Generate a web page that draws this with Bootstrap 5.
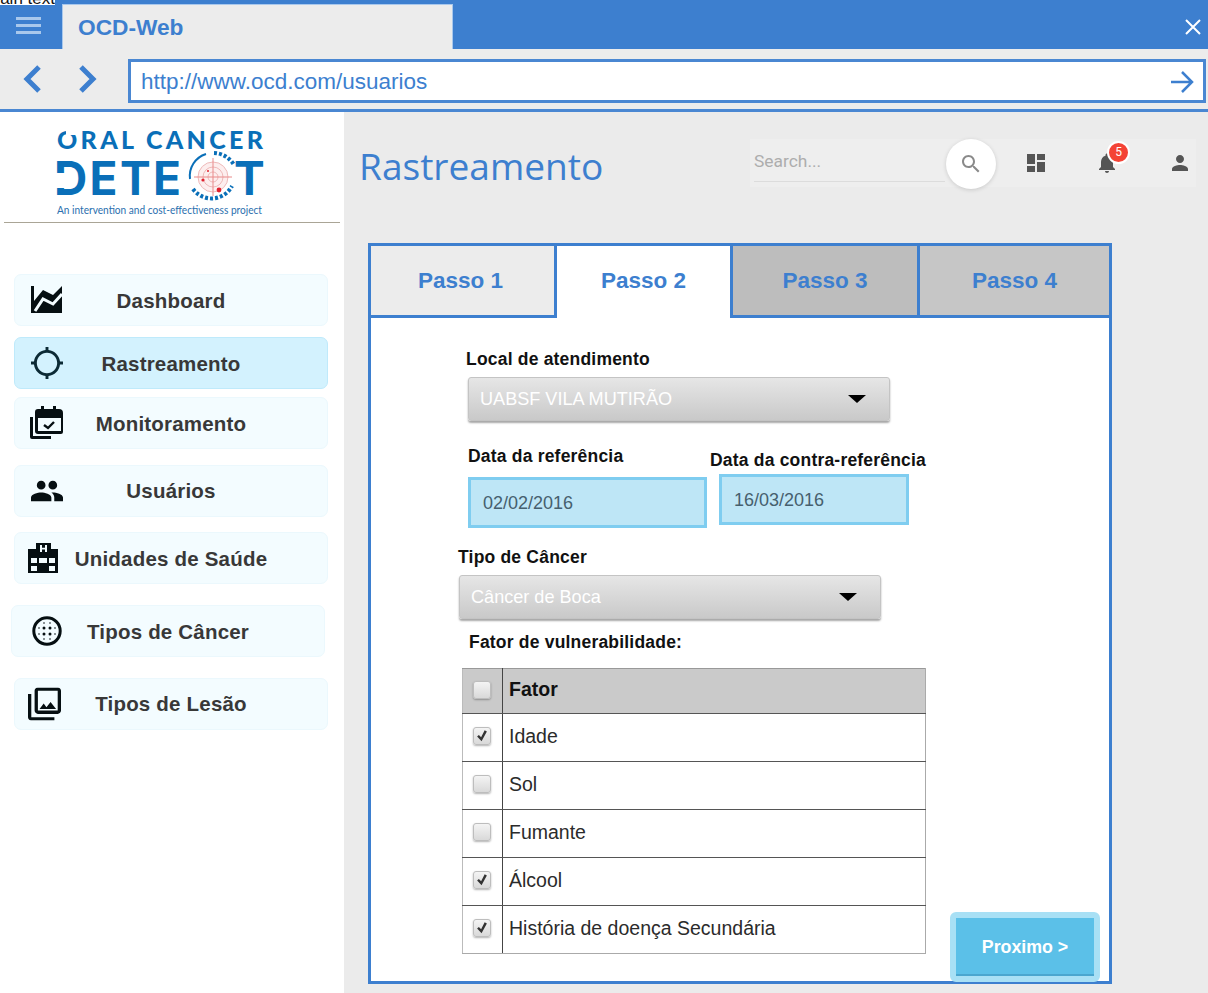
<!DOCTYPE html>
<html lang="en">
<head>
    <meta charset="UTF-8">
    <meta name="viewport" content="width=device-width, initial-scale=1.0">
    <title>OCD-Web</title>
    <link rel="stylesheet" href="https://cdn.jsdelivr.net/npm/bootstrap@5.3.0/dist/css/bootstrap.min.css">
    <style>
        html, body { height: 993px; overflow: hidden; }
        body { font-family: "Liberation Sans", Arial, sans-serif; background: #fff; position: relative; }
        .stray-text { position: absolute; left: -14px; top: -11px; height: 16px; overflow: hidden; font-size: 17px; line-height: 20px; color: #111; background: #fff; z-index: 5; white-space: nowrap; }

        .tab-strip { height: 49px; background: #3d7fcf; }
        .menu-btn { width: 62px; padding-top: 17px; }
        .menu-btn span { display: block; width: 25px; height: 3px; background: #a9c8ec; margin: 0 0 4px 16px; }
        .browser-tab { width: 391px; margin-top: 4px; background: #ececec; border: 1px solid #a9c8ec; border-bottom: 0; color: #3d7fcf; font-size: 22.7px; font-weight: 700; line-height: 44px; padding-left: 15px; }
        .close-x { margin: 18px 6px 0 0; }

        .address-row { height: 63px; background: #ececec; border-bottom: 3px solid #4a87d2; }
        .nav-arrows { width: 128px; gap: 32px; padding-left: 22px; }
        .url-box { width: 1078px; height: 44px; margin-top: 10px; background: #fff; border: 3px solid #4a87d2; color: #3d7fcf; font-size: 22.5px; line-height: 38px; padding: 1px 9px 0 10px; }

        .page-body { height: 881px; }
        .side-col { width: 344px; background: #fff; }
        .logo-box { width: 336px; height: 111px; margin-left: 4px; border-bottom: 1px solid #aaa596; padding: 15px 0 0 52px; }
        .menu-list { padding-top: 51px; }
        .menu-item { width: 314px; height: 52px; margin-left: 14px; padding-left: 16px; background: #f3fcff; border: 1px solid #ebf8fd; border-radius: 7px; font-weight: 700; font-size: 20.5px; color: #383838; letter-spacing: .2px; position: relative; }
        .menu-item svg { position: absolute; left: 16px; top: 50%; transform: translateY(-50%); }
        .menu-item.on { background: #d3f2fe; border-color: #bfeafb; }
        .menu-label { flex: 1; text-align: center; padding: 2px 16px 0 0; }
        .menu-label.up-1 { padding-top: 0; }
        .gap-a { margin-top: 11px; }
        .gap-b { margin-top: 8px; }
        .gap-c { margin-top: 16px; }
        .gap-d { margin-top: 15px; }
        .gap-e { margin: 21px 0 0 11px; }
        .gap-f { margin-top: 21px; }
        .menu-item svg.ico-15 { left: 15px; }
        .menu-item svg.ico-13 { left: 13px; }
        .menu-item svg.ico-20 { left: 20px; }

        .main-col { background: #ebebeb; padding: 25px 0 0 15px; }
        .page-title { font-family: "Open Sans", sans-serif; font-weight: 500; font-size: 37.1px; line-height: 58px; color: #3d7fcf; width: 391px; white-space: nowrap; }
        .tool-bar { width: 446px; height: 48px; margin-top: 2px; background: #eeeeee; position: relative; }
        .search-field { width: 191px; height: 43px; margin-left: 4px; border-bottom: 1px solid #dcdcdc; font-family: Roboto, sans-serif; font-size: 17.4px; color: #adadad; line-height: 44px; }
        .search-btn { position: absolute; left: 196px; top: 0; width: 50px; height: 50px; border-radius: 50%; background: #fff; box-shadow: 0 1px 4px rgba(0,0,0,.15); }
        .tool-icon { position: absolute; top: 12px; }
        .icon-grid { left: 274px; }
        .icon-bell { left: 345px; }
        .icon-user { left: 418px; }
        .bell-count { position: absolute; left: 357px; top: 2px; width: 23px; height: 23px; border-radius: 50%; background: #f44336; border: 2px solid #fff; color: #fff; font-family: Roboto, sans-serif; font-size: 12px; line-height: 19px; text-align: center; }

        .step-panel { width: 744px; height: 741px; margin: 48px 0 0 9px; background: #fff; border: 3px solid #3d7fcf; }
        .step-tabs { height: 72px; }
        .step-tab { height: 72px; background: #ececec; color: #3d7fcf; font-size: 22.5px; font-weight: 700; border-bottom: 3px solid #3d7fcf; border-right: 3px solid #3d7fcf; line-height: 69px; text-align: center; }
        .step-tab.t1 { width: 186px; padding-right: 4px; }
        .step-tab.t2 { width: 176px; background: #fff; border-bottom: 0; }
        .step-tab.t3 { width: 187px; background: #bdbdbd; }
        .step-tab.t4 { width: 189px; background: #c6c6c6; border-right: 0; }

        .form-area { padding-top: 31px; }
        .field-label { font-size: 17.5px; font-weight: 700; line-height: 20px; color: #111; letter-spacing: .2px; }
        .fake-select { width: 422px; height: 44px; border-radius: 3px; border: 1px solid #c4c4c4; background: linear-gradient(#e6e6e6, #c9c9c9); box-shadow: 0 2px 2px rgba(0,0,0,.35); color: #fff; font-size: 18.1px; line-height: 42px; padding: 0 11px; position: relative; }
        .fake-select::after { content: ""; position: absolute; right: 23px; top: 17px; border: 9px solid transparent; border-top: 8px solid #000; border-bottom: 0; }
        .date-box { background: #bee6f6; border: 3px solid #7fcdf0; color: #46606e; font-size: 18px; padding: 0 12px; }
        .date-a { width: 239px; height: 51px; line-height: 47px; }
        .date-b { width: 190px; height: 51px; line-height: 46px; }
        .lbl-local { margin-left: 95px; }
        .sel-local { margin: 8px 0 0 97px; }
        .dates-row { margin: 25px 0 0 97px; }
        .date-col-a { width: 241px; }
        .date-col-a .field-label { margin-bottom: 11px; }
        .date-col-b { margin-top: 4px; margin-left: 1px; }
        .date-col-b .field-label { margin-bottom: 4px; white-space: nowrap; }
        .date-col-b .date-box { margin-left: 9px; }
        .lbl-tipo { margin: 19px 0 0 87px; }
        .sel-tipo { margin: 8px 0 0 88px; }
        .lbl-fator { margin: 13px 0 0 98px; }
        .factor-row { margin: 16px 0 0 91px; }

        .factor-table { width: 464px; border-collapse: collapse; font-size: 19.5px; color: #2b2b2b; margin: 0; }
        .factor-table th, .factor-table td { height: 48px; padding: 0 6px 2px; border: 0; border-bottom: 1px solid #555; vertical-align: middle; background: #fff; }
        .factor-table th { height: 45px; background: #cacaca; font-weight: 700; color: #111; border-top: 1px solid #999; }
        .factor-table tr:last-child td { border-bottom: 1px solid #aaa; }
        .factor-table .tick-cell { width: 40px; padding: 0 0 3px; border-right: 1px solid #444; border-left: 1px solid #bbb; }
        .factor-table .end-cell { border-right: 1px solid #aaa; }
        .tick { appearance: none; display: block; width: 18px; height: 18px; margin: 0 0 0 10px; border: 1px solid #bdbdbd; border-radius: 3px; background: linear-gradient(#f4f4f4, #d9d9d9); box-shadow: 0 1px 2px rgba(0,0,0,.3); }
        .tick:checked { background: url("data:image/svg+xml,%3Csvg xmlns='http://www.w3.org/2000/svg' viewBox='0 0 18 18'%3E%3Cpath d='M3.500 9.500l2-1.500 2.500 2.500L12 2.500l2.500 1.500L8.500 15z' fill='%23333'/%3E%3C/svg%3E") center/100% no-repeat, linear-gradient(#f4f4f4, #d9d9d9); }

        .next-btn { width: 150px; height: 70px; margin: 0 0 -28px 24px; border: 6px solid #a8e0f5; border-radius: 6px; background: #5bc0e8; color: #fff; font-size: 17.8px; font-weight: 700; box-shadow: inset 0 -2px 0 #4aa6cf; padding: 1px 0 0; flex: none; }
    </style>
</head>
<body>
    <div class="stray-text">Main text</div>

    <!-- browser chrome -->
    <div class="tab-strip d-flex">
        <div class="menu-btn"><span></span><span></span><span></span></div>
        <div class="browser-tab">OCD-Web</div>
        <svg class="close-x ms-auto" width="18" height="18" viewBox="0 0 18 18"><path d="M2 2l14 14M16 2L2 16" stroke="#fff" stroke-width="2" fill="none"/></svg>
    </div>
    <div class="address-row d-flex">
        <div class="nav-arrows d-flex align-items-center">
            <svg width="22" height="28" viewBox="0 0 22 28"><path d="M17 2L5 14l12 12" stroke="#3d7fcf" stroke-width="5" fill="none"/></svg>
            <svg width="22" height="28" viewBox="0 0 22 28"><path d="M5 2l12 12L5 26" stroke="#3d7fcf" stroke-width="5" fill="none"/></svg>
        </div>
        <div class="url-box d-flex justify-content-between align-items-center">
            <span>http://www.ocd.com/usuarios</span>
            <svg width="24" height="24" viewBox="0 0 24 24"><path d="M1 12h21M12 2l10 10-10 10" stroke="#3d7fcf" stroke-width="2.500" fill="none"/></svg>
        </div>
    </div>

    <div class="page-body d-flex">
        <!-- left menu -->
        <div class="side-col">
            <div class="logo-box">
                <svg width="212" height="92" viewBox="0 0 212 92">
                    <text x="1" y="22" font-family="Lato, sans-serif" font-weight="900" font-size="25" fill="#0a6fb8" textLength="206" lengthAdjust="spacing">ORAL CANCER</text>
                    <rect x="10" y="2" width="11" height="6" fill="#fff"/>
                    <text x="-2" y="68" font-family="Inter, sans-serif" font-weight="700" font-size="46" fill="#0a6fb8" textLength="127" lengthAdjust="spacing">DETE</text>
                    <rect x="0" y="46" width="12" height="15" fill="#fff"/>
                    <text x="178" y="68" font-family="Inter, sans-serif" font-weight="700" font-size="46" fill="#0a6fb8">T</text>
                    <g fill="none">
                        <circle cx="157" cy="50" r="15" fill="#fdeeee" stroke="#eeb9b9"/>
                        <circle cx="157" cy="50" r="10" stroke="#eeb9b9"/>
                        <circle cx="157" cy="50" r="5" stroke="#eeb9b9"/>
                        <path d="M138 50h38M157 31v38" stroke="#e98a8a"/>
                        <path d="M134 52a23 23 0 0 1 16-25" stroke="#0a6fb8" stroke-width="2"/>
                        <path d="M137 62a23 23 0 0 0 39-3M158 26a24 24 0 0 1 20 12" stroke="#0a6fb8" stroke-width="4" stroke-dasharray="3 2"/>
                    </g>
                    <circle cx="147" cy="53" r="1.600" fill="#e01f2d"/>
                    <circle cx="163" cy="63" r="2.400" fill="#e01f2d"/>
                    <circle cx="152" cy="44" r="1" fill="#e01f2d"/>
                    <text x="1" y="87" font-family="Lato, sans-serif" font-size="10.500" fill="#2a6fae" textLength="205" lengthAdjust="spacingAndGlyphs">An intervention and cost-effectiveness project</text>
                </svg>
            </div>
            <div class="menu-list">
                <div class="menu-item d-flex align-items-center">
                    <svg width="32" height="28" viewBox="0 0 32 28"><path d="M0 0h3v15L12 4l10 5L31 0v27H0z" fill="#060f12"/><path d="M4 25l8-12 10 5 9-10" stroke="#f3fcff" stroke-width="3" fill="none"/></svg>
                    <span class="menu-label">Dashboard</span>
                </div>
                <div class="menu-item on d-flex align-items-center gap-a">
                    <svg width="32" height="32" viewBox="1 1 22 22"><path fill="#0b2a35" d="M20.940 11c-.46-4.170-3.770-7.480-7.940-7.940V1h-2v2.060C6.830 3.520 3.520 6.830 3.060 11H1v2h2.060c.46 4.170 3.770 7.480 7.940 7.940V23h2v-2.060c4.170-.46 7.480-3.770 7.940-7.940H23v-2h-2.060zM12 19c-3.870 0-7-3.130-7-7s3.130-7 7-7 7 3.130 7 7-3.130 7-7 7z"/></svg>
                    <span class="menu-label">Rastreamento</span>
                </div>
                <div class="menu-item d-flex align-items-center gap-b">
                    <svg class="ico-15" width="34" height="34" viewBox="0 0 34 34"><path fill="#060f12" d="M0 11h3v19h18v3H2a2 2 0 0 1-2-2z"/><path fill="#060f12" d="M8 3h3V0h3v3h9V0h3v3h3a4 4 0 0 1 4 4v19a2 2 0 0 1-2 2H8a3 3 0 0 1-3-3V6a3 3 0 0 1 3-3zm0 9v13h23V12z"/><path d="M14 19l4 3 6-6" stroke="#060f12" stroke-width="2.400" fill="none"/></svg>
                    <span class="menu-label">Monitoramento</span>
                </div>
                <div class="menu-item d-flex align-items-center gap-c">
                    <svg width="32" height="32" viewBox="1 1 22 22"><path fill="#060f12" d="M16 11c1.660 0 2.990-1.340 2.990-3S17.660 5 16 5c-1.660 0-3 1.340-3 3s1.340 3 3 3zm-8 0c1.660 0 2.990-1.340 2.990-3S9.660 5 8 5C6.340 5 5 6.340 5 8s1.340 3 3 3zm0 2c-2.330 0-7 1.170-7 3.500V19h14v-2.500c0-2.330-4.670-3.500-7-3.500zm8 0c-.29 0-.62.02-.97.05 1.160.84 1.970 1.970 1.970 3.450V19h6v-2.500c0-2.330-4.670-3.500-7-3.500z"/></svg>
                    <span class="menu-label up-1">Usuários</span>
                </div>
                <div class="menu-item d-flex align-items-center gap-d">
                    <svg class="ico-13" width="30" height="30" viewBox="0 0 30 30"><path fill="#060f12" fill-rule="evenodd" d="M8 0h15v6h7v24H0V6h8zM12 2v7h2V6.500h3V9h2V2h-2v2.700h-3V2zM3 15v5h6v-5zm8 0v5h8v-5zm10 0v5h6v-5zM3 23v5h6v-5zm18 0v5h6v-5z"/></svg>
                    <span class="menu-label">Unidades de Saúde</span>
                </div>
                <div class="menu-item d-flex align-items-center gap-e">
                    <svg class="ico-20" width="30" height="30" viewBox="0 0 30 30"><circle cx="15" cy="15" r="13.200" fill="none" stroke="#060f12" stroke-width="3"/><g fill="#060f12"><circle cx="12" cy="12" r="1.500"/><circle cx="18" cy="12" r="1.500"/><circle cx="12" cy="18" r="1.500"/><circle cx="18" cy="18" r="1.500"/><circle cx="12" cy="7" r=".8"/><circle cx="18" cy="7" r=".8"/><circle cx="12" cy="23" r=".8"/><circle cx="18" cy="23" r=".8"/><circle cx="7" cy="12" r=".8"/><circle cx="7" cy="18" r=".8"/><circle cx="23" cy="12" r=".8"/><circle cx="23" cy="18" r=".8"/></g></svg>
                    <span class="menu-label">Tipos de Câncer</span>
                </div>
                <div class="menu-item d-flex align-items-center gap-f">
                    <svg class="ico-13" width="33" height="33" viewBox="2 2 20 20"><path fill="#060f12" d="M20 4v12H8V4h12m0-2H8c-1.100 0-2 .9-2 2v12c0 1.100.9 2 2 2h12c1.100 0 2-.9 2-2V4c0-1.100-.9-2-2-2zm-8.500 9.670l1.690 2.260 2.480-3.100L19 15H9zM2 6v14c0 1.100.9 2 2 2h14v-2H4V6H2z"/></svg>
                    <span class="menu-label up-1">Tipos de Lesão</span>
                </div>
            </div>
        </div>

        <!-- main area -->
        <div class="main-col flex-grow-1">
            <div class="d-flex">
                <div class="page-title">Rastreamento</div>
                <div class="tool-bar">
                    <div class="search-field">Search...</div>
                    <div class="search-btn d-flex align-items-center justify-content-center">
                        <svg width="24" height="24" viewBox="0 0 24 24"><path fill="#8a8a8a" d="M15.500 14h-.79l-.28-.27C15.410 12.590 16 11.110 16 9.500 16 5.910 13.090 3 9.500 3S3 5.910 3 9.500 5.910 16 9.500 16c1.610 0 3.090-.59 4.230-1.570l.27.28v.79l5 4.990L20.490 19l-4.990-5zm-6 0C7.010 14 5 11.990 5 9.500S7.010 5 9.500 5 14 7.010 14 9.500 11.990 14 9.500 14z"/></svg>
                    </div>
                    <svg class="tool-icon icon-grid" width="24" height="24" viewBox="0 0 24 24"><path fill="#555" d="M3 13h8V3H3v10zm0 8h8v-6H3v6zm10 0h8V11h-8v10zm0-18v6h8V3h-8z"/></svg>
                    <svg class="tool-icon icon-bell" width="24" height="24" viewBox="0 0 24 24"><path fill="#555" d="M12 22c1.100 0 2-.9 2-2h-4c0 1.100.89 2 2 2zm6-6v-5c0-3.070-1.640-5.640-4.500-6.320V4c0-.83-.67-1.500-1.500-1.500s-1.500.67-1.500 1.500v.68C7.630 5.360 6 7.920 6 11v5l-2 2v1h16v-1l-2-2z"/></svg>
                    <span class="bell-count">5</span>
                    <svg class="tool-icon icon-user" width="24" height="24" viewBox="0 0 24 24"><path fill="#555" d="M12 12c2.210 0 4-1.790 4-4s-1.790-4-4-4-4 1.790-4 4 1.790 4 4 4zm0 2c-2.670 0-8 1.340-8 4v2h16v-2c0-2.660-5.330-4-8-4z"/></svg>
                </div>
            </div>

            <div class="step-panel">
                <div class="step-tabs d-flex">
                    <div class="step-tab t1">Passo 1</div>
                    <div class="step-tab t2">Passo 2</div>
                    <div class="step-tab t3">Passo 3</div>
                    <div class="step-tab t4">Passo 4</div>
                </div>
                <div class="form-area">
                    <div class="field-label lbl-local">Local de atendimento</div>
                    <div class="fake-select sel-local">UABSF VILA MUTIRÃO</div>

                    <div class="d-flex dates-row">
                        <div class="date-col-a">
                            <div class="field-label">Data da referência</div>
                            <div class="date-box date-a">02/02/2016</div>
                        </div>
                        <div class="date-col-b">
                            <div class="field-label">Data da contra-referência</div>
                            <div class="date-box date-b">16/03/2016</div>
                        </div>
                    </div>

                    <div class="field-label lbl-tipo">Tipo de Câncer</div>
                    <div class="fake-select sel-tipo">Câncer de Boca</div>
                    <div class="field-label lbl-fator">Fator de vulnerabilidade:</div>

                    <div class="d-flex align-items-end factor-row">
                        <table class="table factor-table">
                            <thead>
                                <tr><th class="tick-cell"><input class="tick" type="checkbox"></th><th class="end-cell">Fator</th></tr>
                            </thead>
                            <tbody>
                                <tr><td class="tick-cell"><input class="tick" type="checkbox" checked></td><td class="end-cell">Idade</td></tr>
                                <tr><td class="tick-cell"><input class="tick" type="checkbox"></td><td class="end-cell">Sol</td></tr>
                                <tr><td class="tick-cell"><input class="tick" type="checkbox"></td><td class="end-cell">Fumante</td></tr>
                                <tr><td class="tick-cell"><input class="tick" type="checkbox" checked></td><td class="end-cell">Álcool</td></tr>
                                <tr><td class="tick-cell"><input class="tick" type="checkbox" checked></td><td class="end-cell">História de doença Secundária</td></tr>
                            </tbody>
                        </table>
                        <button type="button" class="btn next-btn">Proximo &gt;</button>
                    </div>
                </div>
            </div>
        </div>
    </div>
</body>
</html>
